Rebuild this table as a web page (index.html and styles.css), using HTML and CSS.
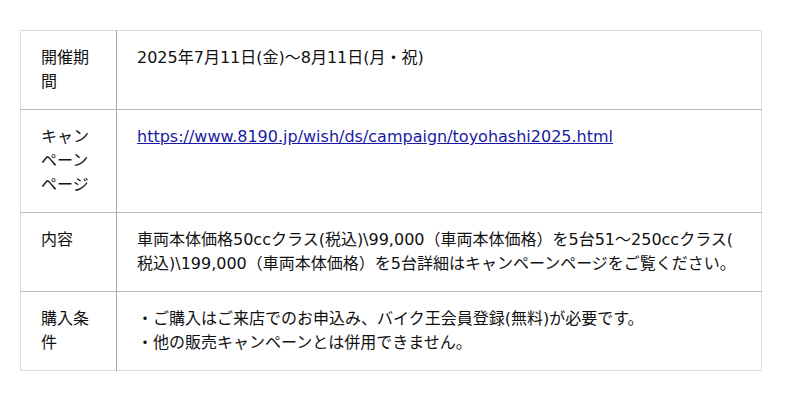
FILE: index.html
```html
<!DOCTYPE html>
<html lang="ja">
<head>
    <meta charset="UTF-8">
    <meta name="viewport" content="width=device-width, initial-scale=1.0">
    <title>キャンペーン概要</title>
    <link rel="stylesheet" href="styles.css">
</head>
<body>
    <div class="wrap">
        <table class="info-table">
            <tr>
                <th>開催期間</th>
                <td>2025年7月11日(金)〜8月11日(月・祝)</td>
            </tr>
            <tr>
                <th>キャンペーンページ</th>
                <td><a href="https://www.8190.jp/wish/ds/campaign/toyohashi2025.html">https://www.8190.jp/wish/ds/campaign/toyohashi2025.html</a></td>
            </tr>
            <tr>
                <th>内容</th>
                <td class="wrap-any">車両本体価格50ccクラス(税込)\99,000（車両本体価格）を5台51〜250ccクラス(税込)\199,000（車両本体価格）を5台詳細はキャンペーンページをご覧ください。</td>
            </tr>
            <tr>
                <th>購入条件</th>
                <td>・ご購入はご来店でのお申込み、バイク王会員登録(無料)が必要です。<br>・他の販売キャンペーンとは併用できません。</td>
            </tr>
        </table>
    </div>
</body>
</html>
```

FILE: styles.css
```css
body {
    margin: 0;
    background: #fff;
    color: #111;
    font-family: "DejaVu Sans", "Noto Sans CJK JP", sans-serif;
    font-size: 16px;
    line-height: 24px;
}
.wrap {
    padding: 30px 0 0 20px;
}
.info-table {
    width: 742px;
    border-collapse: collapse;
    border: 1px solid #ddd;
}
.info-table th,
.info-table td {
    padding: 15px 20px;
    text-align: left;
    vertical-align: top;
    font-weight: normal;
    border-top: 1px solid #bbb;
}
.info-table tr:first-child th,
.info-table tr:first-child td {
    border-top-color: #ddd;
}
.info-table th {
    width: 55px;
    border-right: 1px solid #aaa;
}
.wrap-any {
    line-break: anywhere;
}
.info-table a {
    color: #1a1aa6;
}
```
